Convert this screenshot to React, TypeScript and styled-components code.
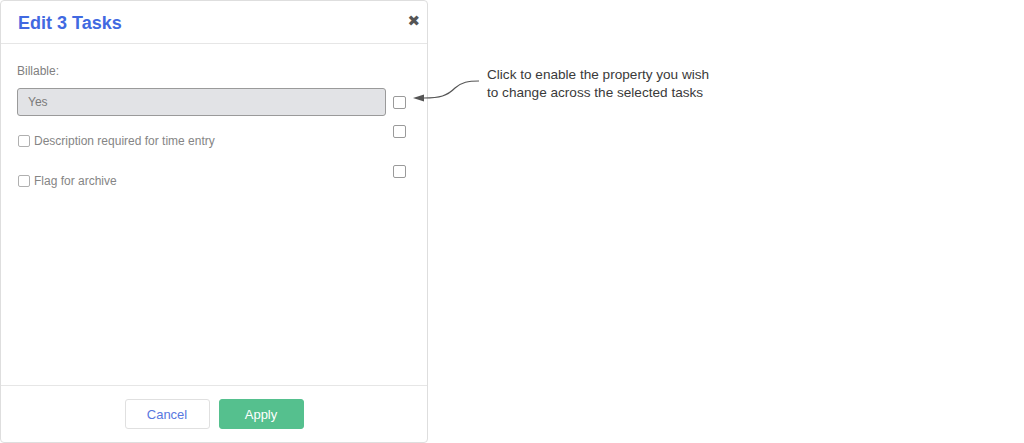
import React from 'react';
import styled, { createGlobalStyle } from 'styled-components';

const GlobalStyle = createGlobalStyle`
  html, body {
    margin: 0;
    padding: 0;
    background: #ffffff;
  }
  body {
    font-family: "Liberation Sans", Arial, sans-serif;
  }
`;

const App = () => {
  return (
    <Page>
      <GlobalStyle />
      <Modal>
        <Header>
          <Title>Edit 3 Tasks</Title>
          <CloseButton aria-label="close">✖</CloseButton>
        </Header>
        <Body>
          <FieldRow>
            <FieldMain>
              <FieldLabel>Billable:</FieldLabel>
              <SelectBox>Yes</SelectBox>
            </FieldMain>
            <EnableBox $offset={32} />
          </FieldRow>
          <CheckRow>
            <CheckLine>
              <SmallBox />
              <span>Description required for time entry</span>
            </CheckLine>
            <EnableBox $offset={9} />
          </CheckRow>
          <CheckRow>
            <CheckLine>
              <SmallBox />
              <span>Flag for archive</span>
            </CheckLine>
            <EnableBox $offset={9} />
          </CheckRow>
        </Body>
        <Footer>
          <Button>Cancel</Button>
          <Button $primary>Apply</Button>
        </Footer>
      </Modal>
      <Callout>
        <Arrow width="80" height="30" viewBox="0 0 80 30">
          <path
            d="M67 9 C 56 9, 50 10, 43 16 C 35 24, 28 26, 12 26"
            fill="none"
            stroke="#555"
            strokeWidth="1.2"
          />
          <path d="M1 26 L12 22.5 L12 29.5 Z" fill="#555" />
        </Arrow>
        <CalloutText>
          Click to enable the property you wish
          <br />
          to change across the selected tasks
        </CalloutText>
      </Callout>
    </Page>
  );
};

export default App;

const Page = styled.div`
  display: flex;
  align-items: flex-start;
  width: 1024px;
  height: 443px;
  position: relative;
`;

const Modal = styled.div`
  width: 428px;
  height: 443px;
  box-sizing: border-box;
  border: 1px solid #dedede;
  border-radius: 4px;
  display: flex;
  flex-direction: column;
  background: #fff;
`;

const Header = styled.div`
  height: 43px;
  box-sizing: border-box;
  border-bottom: 1px solid #e6e6e6;
  display: flex;
  align-items: center;
  justify-content: space-between;
  padding: 0 7px 0 17px;
  flex-shrink: 0;
`;

const Title = styled.h2`
  margin: 0;
  font-size: 18px;
  font-weight: bold;
  color: #4169e1;
  line-height: 1;
  margin-top: 1px;
`;

const CloseButton = styled.span`
  font-size: 15px;
  color: #555;
  line-height: 1;
  margin-top: -2px;
  font-family: "DejaVu Sans", sans-serif;
`;

const Body = styled.div`
  flex: 1;
  padding: 20px 21px 0 16px;
  display: flex;
  flex-direction: column;
`;

const FieldRow = styled.div`
  display: flex;
  align-items: flex-start;
  gap: 7px;
`;

const CheckRow = styled.div`
  display: flex;
  align-items: flex-start;
  height: 40px;
`;

const FieldMain = styled.div`
  flex: 1;
  display: flex;
  flex-direction: column;
`;

const FieldLabel = styled.label`
  font-size: 12px;
  color: #808080;
  line-height: 14px;
  margin-bottom: 10px;
`;

const SelectBox = styled.div`
  height: 28px;
  box-sizing: border-box;
  border: 1px solid #9a9a9a;
  border-radius: 3px;
  background: #e2e3e6;
  font-size: 12px;
  color: #7a7a7a;
  display: flex;
  align-items: center;
  padding-left: 10px;
`;

const EnableBox = styled.span<{ $offset: number }>`
  width: 13px;
  height: 13px;
  box-sizing: border-box;
  border: 1px solid #9a9a9a;
  border-radius: 2px;
  margin-top: ${(p) => p.$offset}px;
  flex-shrink: 0;
`;

const CheckLine = styled.label`
  flex: 1;
  display: flex;
  align-items: center;
  gap: 4px;
  padding-left: 1px;
  margin-top: 17px;
  height: 16px;
  font-size: 12px;
  color: #858585;
`;

const SmallBox = styled.span`
  width: 12px;
  height: 12px;
  box-sizing: border-box;
  border: 1px solid #b0b0b0;
  border-radius: 2px;
  flex-shrink: 0;
`;

const Footer = styled.div`
  height: 57px;
  box-sizing: border-box;
  border-top: 1px solid #e6e6e6;
  display: flex;
  align-items: flex-start;
  justify-content: center;
  gap: 9px;
  padding-top: 13px;
  flex-shrink: 0;
`;

const Button = styled.button<{ $primary?: boolean }>`
  width: 85px;
  height: 30px;
  box-sizing: border-box;
  border-radius: 3px;
  font-family: "Liberation Sans", Arial, sans-serif;
  font-size: 13px;
  border: 1px solid ${(p) => (p.$primary ? '#55c08e' : '#e0e0e0')};
  background: ${(p) => (p.$primary ? '#55c08e' : '#fff')};
  color: ${(p) => (p.$primary ? '#fff' : '#5878e0')};
`;

const Callout = styled.div`
  position: absolute;
  left: 412px;
  top: 66px;
  display: flex;
  align-items: flex-start;
`;

const Arrow = styled.svg`
  display: block;
  margin-top: 6px;
`;

const CalloutText = styled.div`
  font-size: 13.6px;
  line-height: 18px;
  color: #3a3a3a;
  margin-left: -5px;
`;
